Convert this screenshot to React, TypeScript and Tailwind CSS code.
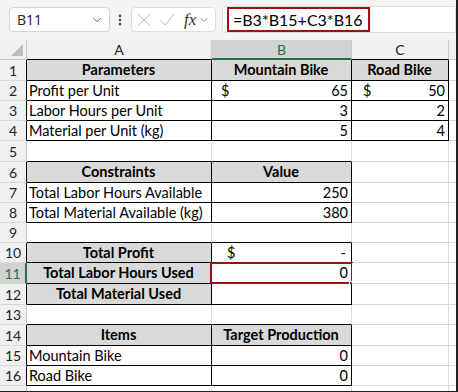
import { ChevronDown, EllipsisVertical } from 'lucide-react'

type Cell = {
  text?: string
  bold?: boolean
  align?: 'left' | 'center' | 'right'
  dollar?: string
}

const FONT = "font-['Lato','Liberation_Sans',sans-serif]"

// row heights include the bottom gridline
const heights = [21, 20, 20, 20, 21, 21, 20, 20, 20, 20, 21, 21, 20, 21, 20, 20]

const rows: Record<number, Cell[]> = {
  1: [
    { text: 'Parameters', bold: true, align: 'center' },
    { text: 'Mountain Bike', bold: true, align: 'center' },
    { text: 'Road Bike', bold: true, align: 'center' },
  ],
  2: [{ text: 'Profit per Unit' }, { text: '65', align: 'right', dollar: 'pl-[9px]' }, { text: '50', align: 'right', dollar: 'pl-[11px]' }],
  3: [{ text: 'Labor Hours per Unit' }, { text: '3', align: 'right' }, { text: '2', align: 'right' }],
  4: [{ text: 'Material per Unit (kg)' }, { text: '5', align: 'right' }, { text: '4', align: 'right' }],
  6: [
    { text: 'Constraints', bold: true, align: 'center' },
    { text: 'Value', bold: true, align: 'center' },
  ],
  7: [{ text: 'Total Labor Hours Available' }, { text: '250', align: 'right' }],
  8: [{ text: 'Total Material Available (kg)' }, { text: '380', align: 'right' }],
  10: [
    { text: 'Total Profit', bold: true, align: 'center' },
    { text: '-', align: 'right', dollar: 'pl-[15px]' },
  ],
  11: [
    { text: 'Total Labor Hours Used', bold: true, align: 'center' },
    { text: '0', align: 'right' },
  ],
  12: [{ text: 'Total Material Used', bold: true, align: 'center' }, {}],
  14: [
    { text: 'Items', bold: true, align: 'center' },
    { text: 'Target Production', bold: true, align: 'center' },
  ],
  15: [{ text: 'Mountain Bike' }, { text: '0', align: 'right' }],
  16: [{ text: 'Road Bike' }, { text: '0', align: 'right' }],
}

// which cells sit inside a bordered table (col 0 = A)
const inTable = (r: number, c: number) => {
  if (r >= 1 && r <= 4) return c <= 2
  if ((r >= 6 && r <= 8) || (r >= 10 && r <= 12) || (r >= 14 && r <= 16)) return c <= 1
  return false
}

const colWidths = ['w-[185px]', 'w-[140px]', 'w-[97px]', 'w-[7px]']

const FormulaBar = () => (
  <div className="h-[40px] bg-[#f3f3f3] flex items-start pt-[7px] pl-[9px] relative">
    <div className="w-[101px] h-[25px] bg-white border border-[#d4d4d4] rounded-[4px] flex items-center justify-between pl-[7px] pr-[5px]">
      <span className="text-[14px] text-[#222] font-['Open_Sans',sans-serif]">B11</span>
      <ChevronDown className="w-[14px] h-[14px] text-[#555]" strokeWidth={1.5} />
    </div>
    <EllipsisVertical className="w-[14px] h-[16px] mt-[5px] ml-[3px] text-[#444]" strokeWidth={2.5} />
    <div className="w-[85px] h-[25px] ml-[4px] bg-white border border-[#dedede] rounded-[4px] flex items-center pl-[5px] gap-[8px]">
      <svg width="14" height="14" viewBox="0 0 14 14" className="text-[#bdbdbd]">
        <path d="M1 1 L13 13 M13 1 L1 13" stroke="currentColor" strokeWidth="1" fill="none" />
      </svg>
      <svg width="16" height="14" viewBox="0 0 16 14" className="text-[#bdbdbd]">
        <path d="M1 7 L6 12 L15 1" stroke="currentColor" strokeWidth="1" fill="none" />
      </svg>
      <span className="text-[17px] italic text-[#333] font-['Liberation_Serif',serif] leading-none ml-[1px]">fx</span>
      <ChevronDown className="w-[12px] h-[12px] -ml-[6px] text-[#666]" strokeWidth={1.5} />
    </div>
    <div className="ml-[6px] flex-1 h-[27px] -mt-[1px] bg-white border border-[#dedede] rounded-l-[4px] flex items-center pl-[4px]">
      <div className="h-[25px] border-2 border-[#a01010] flex items-center pl-[4px] pr-[5px]">
        <span className={`text-[16px] text-black ${FONT}`}>=B3*B15+C3*B16</span>
      </div>
    </div>
  </div>
)

const HeaderRow = () => (
  <div className="flex h-[20px] bg-[#f0f0f0]">
    <div className="w-[27px] h-full border-r border-b border-[#c8c8c8] relative">
      <svg width="12" height="12" viewBox="0 0 12 12" className="absolute right-[3px] bottom-[3px]">
        <path d="M12 0 L12 12 L0 12 Z" fill="#bdbdbd" />
      </svg>
    </div>
    {['A', 'B', 'C', ''].map((l, i) => (
      <div
        key={i}
        className={`${colWidths[i]} h-full flex items-center justify-center text-[14px] ${FONT} ${
          i === 1
            ? 'bg-[#d2d2d2] text-[#217346] border-r border-r-[#c8c8c8] border-b-2 border-b-[#217346]'
            : i === 3
              ? 'border-b border-[#c8c8c8] text-[#222]'
              : 'border-r border-r-[#c8c8c8] border-b border-b-black text-[#222]'
        }`}
      >
        {l}
      </div>
    ))}
  </div>
)

const GridRow = ({ r }: { r: number }) => {
  const cells = rows[r] || []
  const h = heights[r - 1]
  const selectedRow = r === 11
  return (
    <div className="flex" style={{ height: h }}>
      <div
        className={`w-[27px] h-full flex items-center justify-center text-[14px] ${FONT} border-b border-b-[#d8d8d8] ${
          selectedRow
            ? 'bg-[#d2d2d2] text-[#217346] border-r-2 border-r-[#217346]'
            : `bg-[#f0f0f0] text-[#222] border-r ${inTable(r, 0) ? 'border-r-black' : 'border-r-[#c8c8c8]'}`
        }`}
      >
        {r}
      </div>
      {[0, 1, 2, 3].map((c) => {
        const cell = cells[c]
        const t = inTable(r, c)
        const right = t || inTable(r, c + 1) ? 'border-r-black' : 'border-r-[#dadada]'
        const bottom = t || inTable(r + 1, c) ? 'border-b-black' : 'border-b-[#dadada]'
        const bg = cell?.bold ? 'bg-[#d9d9d9]' : 'bg-white'
        const justify =
          cell?.align === 'center' ? 'justify-center' : cell?.align === 'right' ? 'justify-end' : 'justify-start'
        return (
          <div
            key={c}
            className={`${colWidths[c]} h-full relative flex items-center ${justify} ${bg} ${
              c < 3 ? `border-r ${right}` : ''
            } border-b ${bottom} pl-[2px] pr-[3px] text-[14.5px] text-black ${FONT} ${cell?.bold ? 'font-bold' : ''} whitespace-nowrap`}
          >
            {cell?.dollar && (
              <span className={`absolute left-0 top-0 h-full flex items-center ${cell.dollar}`}>$</span>
            )}
            {cell?.text && <span className={cell.text === '-' ? 'mr-[2px]' : ''}>{cell.text}</span>}
            {r === 11 && c === 1 && (
              <>
                <div className="absolute left-[-2px] top-[-1px] right-[-2px] bottom-[-1px] border-2 border-[#a01010]" />
                <div className="absolute right-[-4px] bottom-[-4px] w-[6px] h-[6px] bg-[#217346] border border-white" />
              </>
            )}
          </div>
        )
      })}
    </div>
  )
}

export default function App() {
  return (
    <div className="w-[458px] h-[392px] overflow-hidden bg-white border-r-2 border-b border-[#222] select-none">
      <FormulaBar />
      <HeaderRow />
      {heights.map((_, i) => (
        <GridRow key={i} r={i + 1} />
      ))}
      <div className="flex h-[6px]">
        <div className="w-[27px] h-full bg-[#f0f0f0] border-r border-[#c8c8c8]" />
        <div className="w-[185px] h-full border-r border-[#dadada]" />
        <div className="w-[140px] h-full border-r border-[#dadada]" />
        <div className="w-[97px] h-full border-r border-[#dadada]" />
      </div>
    </div>
  )
}
